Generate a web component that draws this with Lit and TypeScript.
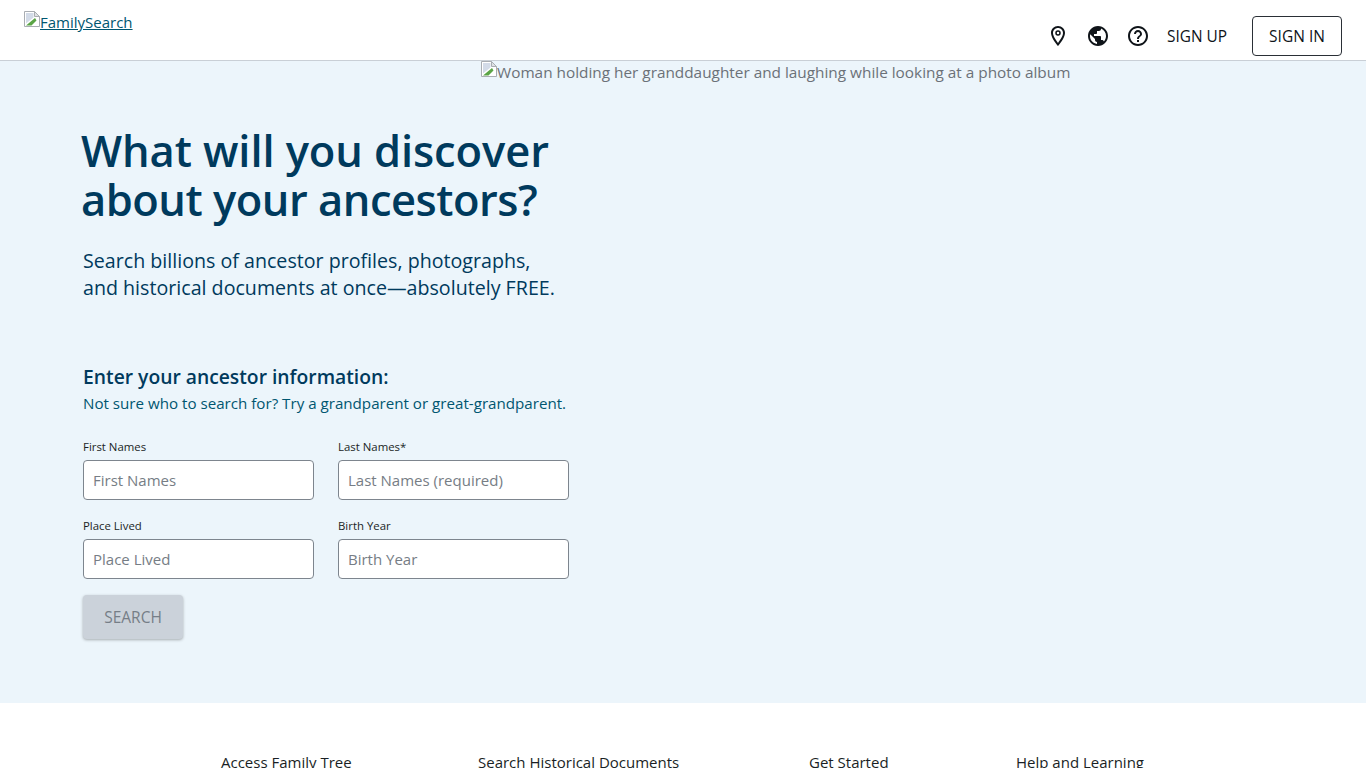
import { LitElement, html, css } from "lit";
import { customElement } from "lit/decorators.js";

const brokenImg = html`<svg class="broken" width="16" height="16" viewBox="0 0 16 16"><path d="M.5.5h10l5 5v10H.5z" fill="#fff" stroke="#a9adb2"/><path d="M10.500.5v5h5z" fill="#dfe1e4" stroke="#a9adb2"/><path d="M2 2h7.500v4.500L2 12.500z" fill="#d3dbe8"/><path d="M2 14.500l9-7.500 1.500 2.500-5 5z" fill="#5ba546"/></svg>`;

@customElement("app-root")
export class AppRoot extends LitElement {
  static styles = css`
    :host { display: block; height: 768px; overflow: hidden; font-family: "Open Sans", "Noto Sans", sans-serif; color: #0f1419; background: #fff; }
    header { height: 61px; box-sizing: border-box; display: flex; justify-content: space-between; padding: 0 24px; border-bottom: 1px solid #c9cfd6; }
    .logo { display: flex; padding-top: 11px; align-items: flex-start; color: #005670; font-size: 15px; line-height: 22px; text-decoration: underline; }
    .broken { flex: none; }
    .nav { display: flex; align-items: center; padding-top: 12px; height: 48px; }
    .icon { width: 24px; height: 24px; margin-right: 16px; display: block; }
    .signup { font-size: 15.4px; margin-left: 1px; width: 60px; text-align: center; white-space: nowrap; }
    .signin { margin-left: 25px; width: 90px; height: 40px; box-sizing: border-box; border: 1px solid #2a2f36; border-radius: 4px; display: flex; align-items: center; justify-content: center; font-size: 15.5px; }
    .hero { height: 642px; background: #ecf5fb; position: relative; box-sizing: border-box; padding: 65px 0 0 83px; }
    .alt { position: absolute; left: 481px; top: 0; display: flex; color: #6b7178; font-size: 15.35px; line-height: 23px; white-space: nowrap; }
    h1 { margin: 0 0 0 -2px; font-size: 43.5px; line-height: 49px; font-weight: 600; color: #003a5d; white-space: nowrap; }
    .line { display: block; letter-spacing: -0.1px; }
    .line.tight { letter-spacing: -0.5px; }
    .sub { margin: 23px 0 0; font-size: 19.65px; line-height: 27px; color: #003a5d; white-space: nowrap; }
    h2 { margin: 62px 0 0; font-size: 19.3px; line-height: 27px; font-weight: 600; color: #003a5d; white-space: nowrap; }
    .hint { margin: 2px 0 0; font-size: 15.15px; line-height: 22px; color: #005670; white-space: nowrap; }
    form { display: grid; grid-template-columns: 231px 231px; column-gap: 24px; row-gap: 17px; margin-top: 24px; width: 486px; }
    label { display: block; font-size: 11.4px; line-height: 18px; color: #1a1f25; white-space: nowrap; }
    .input { margin-top: 4px; height: 40px; box-sizing: border-box; border: 1px solid #7d858e; border-radius: 4px; background: #fff; color: #767d85; font-size: 15px; line-height: 38px; padding-left: 9px; white-space: nowrap; }
    .search { margin-top: 16px; width: 100px; height: 44px; border-radius: 4px; background: #cbd2da; color: #767e87; font-size: 15.5px; display: flex; align-items: center; justify-content: center; box-shadow: 0 1px 3px rgba(0,0,0,.3); }
    footer { display: flex; padding: 48px 0 0 221px; font-size: 15px; line-height: 22px; color: #1a1f25; white-space: nowrap; }
    footer span:nth-child(1) { width: 257px; }
    footer span:nth-child(2) { width: 331px; }
    footer span:nth-child(3) { width: 207px; }
  `;

  private field(label: string, ph: string) {
    return html`<div><label>${label}</label><div class="input">${ph}</div></div>`;
  }

  render() {
    return html`
      <header>
        <a class="logo">${brokenImg}<span>FamilySearch</span></a>
        <div class="nav">
          <svg class="icon" viewBox="0 0 24 24" fill="#0f1419"><path fill-rule="evenodd" d="M12 2C8.130 2 5 5.130 5 9c0 5.250 7 13 7 13s7-7.750 7-13c0-3.870-3.130-7-7-7zM7 9c0-2.760 2.240-5 5-5s5 2.240 5 5c0 2.880-2.880 7.190-5 9.880C9.920 16.210 7 11.850 7 9z"/><circle cx="12" cy="9" r="2" fill="none" stroke="#0f1419" stroke-width="1.500"/></svg>
          <svg class="icon" viewBox="0 0 24 24" fill="#0f1419"><path fill-rule="evenodd" d="M12 2C6.480 2 2 6.480 2 12s4.480 10 10 10 10-4.480 10-10S17.520 2 12 2zm-1 17.930c-3.950-.490-7-3.850-7-7.930 0-.620.080-1.210.210-1.790L9 15v1c0 1.100.900 2 2 2v1.930zm6.900-2.540c-.260-.810-1-1.390-1.900-1.390h-1v-3c0-.550-.450-1-1-1H8v-2h2c.550 0 1-.450 1-1V7h2c1.100 0 2-.900 2-2v-.410c2.930 1.190 5 4.060 5 7.410 0 2.080-.800 3.970-2.100 5.390z"/></svg>
          <svg class="icon" viewBox="0 0 24 24" fill="#0f1419"><path fill-rule="evenodd" d="M12 2C6.480 2 2 6.480 2 12s4.480 10 10 10 10-4.480 10-10S17.520 2 12 2zm0 18c-4.410 0-8-3.590-8-8s3.590-8 8-8 8 3.590 8 8-3.590 8-8 8z"/><path d="M11 18h2v-2h-2v2zm1-12c-2.210 0-4 1.790-4 4h2c0-1.100.900-2 2-2s2 .900 2 2c0 2-3 1.750-3 5h2c0-2.250 3-2.500 3-5 0-2.210-1.790-4-4-4z"/></svg>
          <span class="signup">SIGN UP</span>
          <div class="signin">SIGN IN</div>
        </div>
      </header>
      <section class="hero">
        <div class="alt">${brokenImg}<span>Woman holding her granddaughter and laughing while looking at a photo album</span></div>
        <h1><span class="line">What will you discover</span><span class="line tight">about your ancestors?</span></h1>
        <p class="sub">Search billions of ancestor profiles, photographs,<br />and historical documents at once—absolutely FREE.</p>
        <h2>Enter your ancestor information:</h2>
        <p class="hint">Not sure who to search for? Try a grandparent or great-grandparent.</p>
        <form>
          ${this.field("First Names", "First Names")}
          ${this.field("Last Names*", "Last Names (required)")}
          ${this.field("Place Lived", "Place Lived")}
          ${this.field("Birth Year", "Birth Year")}
        </form>
        <div class="search">SEARCH</div>
      </section>
      <footer>
        <span>Access Family Tree</span><span>Search Historical Documents</span><span>Get Started</span><span>Help and Learning</span>
      </footer>
    `;
  }
}
